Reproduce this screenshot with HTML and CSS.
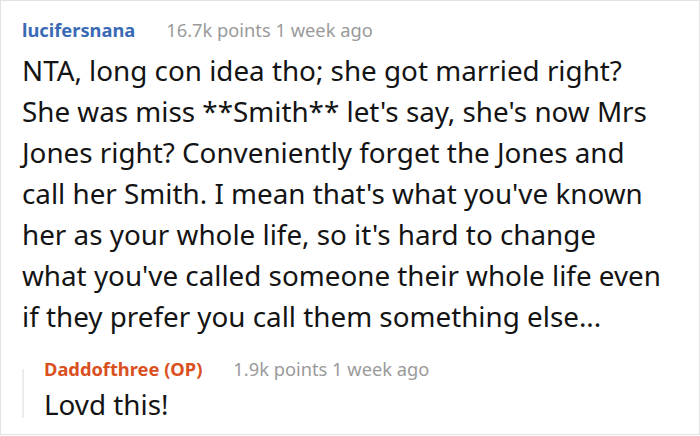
FILE: index.html
```html
<!DOCTYPE html>
<html>
<head>
<meta charset="utf-8">
<link rel="stylesheet" href="styles.css">
</head>
<body>
<div class="card">
  <div class="comment">
    <div class="meta">
      <span class="author">lucifersnana</span>
      <span class="info">16.7k points 1 week ago</span>
    </div>
    <p class="text">NTA, long con idea tho; she got married right? She was miss **Smith** let's say, she's now Mrs Jones right? Conveniently forget the Jones and call her Smith. I mean that's what you've known her as your whole life, so it's hard to change what you've called someone their whole life even if they prefer you call them something else...</p>
  </div>
  <div class="reply">
    <div class="rail"></div>
    <div class="reply-body">
      <div class="meta">
        <span class="author op">Daddofthree (OP)</span>
        <span class="info">1.9k points 1 week ago</span>
      </div>
      <p class="text">Lovd this!</p>
    </div>
  </div>
</div>
</body>
</html>
```
FILE: styles.css
```css
html, body {
  margin: 0;
  padding: 0;
  background: #ffffff;
}
.card {
  box-sizing: border-box;
  width: 700px;
  height: 435px;
  border: 1px solid #e3e3e3;
  padding: 14px 36px 0 21px;
  font-family: "Noto Sans", sans-serif;
}
.meta {
  display: flex;
  align-items: baseline;
  gap: 31px;
  font-size: 18.3px;
  line-height: 30px;
  white-space: nowrap;
}
.author {
  font-weight: 700;
  color: #3a6ab6;
}
.author.op {
  color: #d9501e;
}
.info {
  color: #9a9a9a;
}
.text {
  margin: 5px 0 0 0;
  font-size: 27.8px;
  line-height: 41px;
  color: #141414;
}
.reply {
  display: flex;
  margin-top: 17px;
}
.rail {
  flex: none;
  width: 2px;
  margin: 15px 20px 6px 0;
  background: #ebebeb;
}
.reply .text {
  margin-top: 0;
  line-height: 40px;
}
```
